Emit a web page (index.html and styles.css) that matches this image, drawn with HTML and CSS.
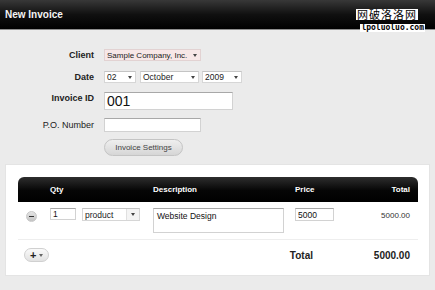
FILE: index.html
```html
<!DOCTYPE html>
<html lang="en">
<head>
    <meta charset="UTF-8">
    <title>New Invoice</title>
    <link rel="stylesheet" href="styles.css">
</head>
<body>
    <div class="topbar">
        <h1>New Invoice</h1>
        <div class="watermark">
            <span class="wm-cn">网破洛洛网</span>
            <span class="wm-url">lpoluoluo.com</span>
        </div>
    </div>

    <form class="details">
        <div class="row row-client">
            <label>Client</label>
            <div class="select select-client">
                <span class="value">Sample Company, Inc.</span>
                <span class="arrow"></span>
            </div>
        </div>
        <div class="row row-date">
            <label>Date</label>
            <div class="select select-day">
                <span class="value">02</span>
                <span class="arrow"></span>
            </div>
            <div class="select select-month">
                <span class="value">October</span>
                <span class="arrow"></span>
            </div>
            <div class="select select-year">
                <span class="value">2009</span>
                <span class="arrow"></span>
            </div>
        </div>
        <div class="row row-id">
            <label>Invoice ID</label>
            <input type="text" class="input input-id" value="001">
        </div>
        <div class="row row-po">
            <label class="light">P.O. Number</label>
            <input type="text" class="input input-po">
        </div>
        <div class="row row-settings">
            <label></label>
            <button type="button" class="pill">Invoice Settings</button>
        </div>
    </form>

    <div class="panel">
        <div class="items">
            <div class="items-head">
                <span></span>
                <span>Qty</span>
                <span></span>
                <span>Description</span>
                <span>Price</span>
                <span class="right">Total</span>
            </div>
            <div class="item">
                <span class="remove"></span>
                <input type="text" class="input qty" value="1">
                <div class="select select-unit">
                    <span class="value">product</span>
                    <span class="arrow boxed"></span>
                </div>
                <textarea class="input desc">Website Design</textarea>
                <input type="text" class="input price" value="5000">
                <span class="line-total">5000.00</span>
            </div>
        </div>
        <div class="totals">
            <button type="button" class="add">
                <span class="plus">+</span>
                <span class="arrow"></span>
            </button>
            <span class="total-label">Total</span>
            <span class="total-value">5000.00</span>
        </div>
    </div>
</body>
</html>
```

FILE: styles.css
```css
body {
    margin: 0;
    background: #ebebeb;
    font-family: "Liberation Sans", Arial, sans-serif;
    color: #222;
}

.topbar {
    position: relative;
    height: 29px;
    background: linear-gradient(#383838, #101010 50%, #000);
    border-bottom: 1px solid #8e8e8e;
    display: flex;
    align-items: center;
}

.topbar h1 {
    margin: 0 0 0 5px;
    font-size: 10px;
    font-weight: bold;
    color: #f4f4f4;
}

.watermark {
    position: absolute;
    right: 10px;
    top: 9px;
    display: flex;
    flex-direction: column;
    align-items: flex-end;
    line-height: 1;
}

.wm-cn {
    background: #fff;
    color: #000;
    font-family: "Noto Sans CJK SC", sans-serif;
    font-size: 11px;
    padding: 0 1px;
    margin-right: 7px;
    letter-spacing: 1px;
}

.wm-url {
    margin-top: 4px;
    background: #fff;
    color: #000;
    font-family: "DejaVu Sans Mono", monospace;
    font-size: 8px;
    font-weight: bold;
    padding: 0 1px;
}

/* form */

.details {
    padding-top: 19px;
}

.row {
    display: flex;
    align-items: center;
    gap: 4px;
}

.row label {
    width: 94px;
    margin-right: 6px;
    text-align: right;
    font-size: 9px;
    font-weight: bold;
    color: #222;
    flex-shrink: 0;
}

.row label.light {
    font-weight: normal;
}

.row-date { margin-top: 10px; }
.row-id { margin-top: 9px; align-items: flex-start; }
.row-id label { padding-top: 1px; }
.row-po { margin-top: 8px; }
.row-settings { margin-top: 7px; }

.select {
    display: flex;
    align-items: center;
    height: 12px;
    background: #fff;
    border: 1px solid #d6d6d6;
    border-top-color: #c4c4c4;
    box-sizing: border-box;
    font-size: 8.5px;
    color: #222;
}

.select .value {
    flex: 1;
    padding-left: 2px;
    white-space: nowrap;
    overflow: hidden;
}

.select .arrow {
    width: 10px;
    height: 100%;
    position: relative;
}

.arrow::after {
    content: "";
    position: absolute;
    left: 3px;
    top: 4px;
    border-left: 2px solid transparent;
    border-right: 2px solid transparent;
    border-top: 3px solid #444;
}

.select-client {
    width: 97px;
    background: #f7e7e7;
    border-color: #e2d2d2;
    font-size: 8px;
}

.select-client .arrow {
    width: 10px;
    flex-shrink: 0;
}

.select-day { width: 32px; }
.select-month { width: 59px; }
.select-year { width: 40px; margin-left: -1px; }

.input {
    background: #fff;
    border: 1px solid #d2d2d2;
    border-top-color: #a8a8a8;
    box-sizing: border-box;
    font-family: "Liberation Sans", Arial, sans-serif;
    color: #111;
    padding: 0 2px;
    outline: none;
}

.input-id {
    width: 129px;
    height: 18px;
    font-size: 14px;
}

.input-po {
    width: 97px;
    height: 14px;
}

.pill {
    width: 79px;
    height: 17px;
    border-radius: 9px;
    border: 1px solid #c4c4c4;
    background: linear-gradient(#efefef, #d6d6d6);
    font-family: "Liberation Sans", Arial, sans-serif;
    font-size: 8px;
    color: #444;
    padding: 0;
}

/* line items */

.panel {
    margin: 8px 5px 0;
    background: #fff;
    border: 1px solid #e4e4e4;
    padding: 12px 11px 13px 12px;
}

.items-head,
.item {
    display: grid;
    grid-template-columns: 32px 32px 71px 142px 50px 1fr;
    align-items: center;
}

.items-head {
    height: 25px;
    border-radius: 6px 6px 0 0;
    background: linear-gradient(#2e2e2e, #050505 55%, #000);
    color: #fff;
    font-size: 8px;
    font-weight: bold;
    padding-right: 8px;
}

.right {
    text-align: right;
}

.item {
    padding: 6px 8px 6px 0;
    border-bottom: 1px solid #eeeeee;
    align-items: start;
}

.remove {
    width: 9px;
    height: 9px;
    border-radius: 50%;
    margin: 3px 0 0 8px;
    background: linear-gradient(#e4e4e4, #c4c4c4);
    border: 1px solid #c8c8c8;
    position: relative;
}

.remove::after {
    content: "";
    position: absolute;
    left: 2px;
    top: 4px;
    width: 5px;
    height: 1px;
    background: #333;
}

.qty {
    width: 26px;
    height: 12px;
    font-size: 8.5px;
}

.select-unit {
    width: 58px;
    height: 13px;
}

.select-unit .arrow.boxed {
    width: 12px;
    border-left: 1px solid #e0e0e0;
    background: #f4f4f4;
}

.select-unit .arrow::after {
    left: 4px;
}

.desc {
    width: 131px;
    height: 25px;
    font-size: 8.5px;
    resize: none;
    padding: 2px 3px;
}

.price {
    width: 39px;
    height: 13px;
    font-size: 8.5px;
}

.line-total {
    text-align: right;
    font-size: 8px;
    color: #333;
    padding-top: 3px;
}

.totals {
    display: flex;
    align-items: center;
    padding: 8px 8px 0 6px;
}

.add {
    display: flex;
    align-items: center;
    gap: 2px;
    width: 25px;
    height: 14px;
    padding: 0 0 0 5px;
    border-radius: 8px;
    border: 1px solid #d0d0d0;
    background: linear-gradient(#fafafa, #e2e2e2);
}

.add .plus {
    font-size: 11px;
    font-weight: bold;
    line-height: 1;
    color: #222;
}

.add .arrow {
    position: relative;
    width: 7px;
    height: 100%;
}

.add .arrow::after {
    left: 1px;
    top: 5px;
    border-top-color: #666;
}

.total-label {
    margin-left: auto;
    font-size: 10px;
    font-weight: bold;
    color: #222;
}

.total-value {
    width: 97px;
    text-align: right;
    font-size: 10px;
    font-weight: bold;
    color: #222;
}
```
